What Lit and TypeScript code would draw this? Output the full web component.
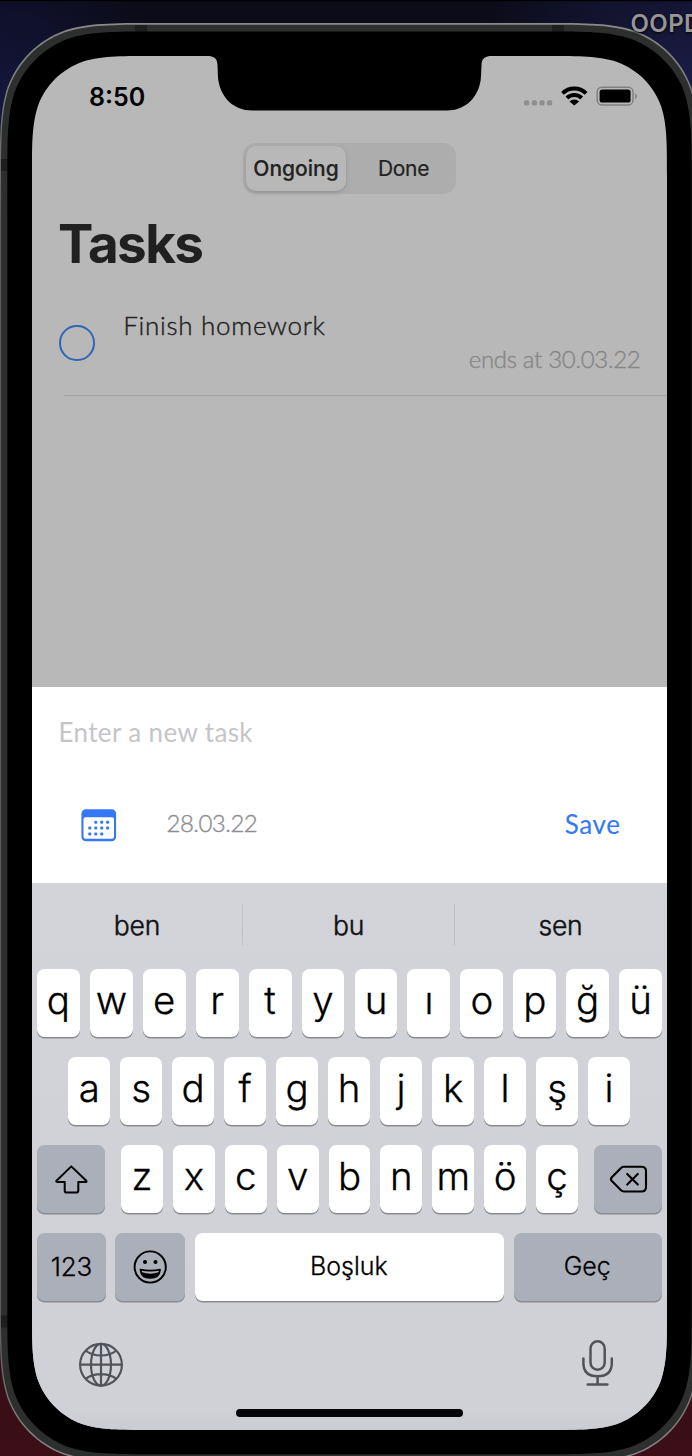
import { LitElement, html, svg, css, unsafeCSS } from "lit";
import { customElement, property } from "lit/decorators.js";

/** Continuous-curvature rounded rectangle, optionally with a notch in its top edge. */
function squircle(x0: number, y0: number, x1: number, y1: number, r: number, notch = ""): string {
  const a = 1.52866 * r, b = 1.08849 * r, c = 0.8684 * r, d = 0.63149 * r, e = 0.07491 * r, f = 0.37282 * r, g = 0.16906 * r;
  return [
    `M${x0 + a} ${y0}`, notch, `H${x1 - a}`,
    `C${x1 - b} ${y0} ${x1 - c} ${y0} ${x1 - d} ${y0 + e}`,
    `C${x1 - f} ${y0 + g} ${x1 - g} ${y0 + f} ${x1 - e} ${y0 + d}`,
    `C${x1} ${y0 + c} ${x1} ${y0 + b} ${x1} ${y0 + a}`,
    `V${y1 - a}`,
    `C${x1} ${y1 - b} ${x1} ${y1 - c} ${x1 - e} ${y1 - d}`,
    `C${x1 - g} ${y1 - f} ${x1 - f} ${y1 - g} ${x1 - d} ${y1 - e}`,
    `C${x1 - c} ${y1} ${x1 - b} ${y1} ${x1 - a} ${y1}`,
    `H${x0 + a}`,
    `C${x0 + b} ${y1} ${x0 + c} ${y1} ${x0 + d} ${y1 - e}`,
    `C${x0 + f} ${y1 - g} ${x0 + g} ${y1 - f} ${x0 + e} ${y1 - d}`,
    `C${x0} ${y1 - c} ${x0} ${y1 - b} ${x0} ${y1 - a}`,
    `V${y0 + a}`,
    `C${x0} ${y0 + b} ${x0} ${y0 + c} ${x0 + e} ${y0 + d}`,
    `C${x0 + g} ${y0 + f} ${x0 + f} ${y0 + g} ${x0 + d} ${y0 + e}`,
    `C${x0 + c} ${y0} ${x0 + b} ${y0} ${x0 + a} ${y0}Z`,
  ].join(" ");
}

const NOTCH =
  "H175 C182 0 185.3 2.5 185.5 9 C185.8 16 185.8 19 186.3 24 C189 42 202 54.5 220 54.5 " +
  "H415 C433 54.5 446 42 448.7 24 C449.2 19 449.2 16 449.5 9 C449.7 2.5 453 0 460 0";
const SCREEN = squircle(0, 0, 635, 1374, 79, NOTCH);

const bezel = html`<svg class="bezel" viewBox="0 0 692 1456" width="692" height="1456" aria-hidden="true">
  <defs>
    <linearGradient id="edge" x1="0" y1="23" x2="0" y2="1462" gradientUnits="userSpaceOnUse">
      <stop offset="0" stop-color="#8a8a8a" /><stop offset=".07" stop-color="#757575" />
      <stop offset=".14" stop-color="#5a5c5c" /><stop offset=".9" stop-color="#5a5c5c" />
      <stop offset="1" stop-color="#8a8a8a" />
    </linearGradient>
  </defs>
  <rect width="692" height="1.2" fill="#000" />
  <path d=${squircle(-0.2, 23, 699, 1462.5, 102)} fill="url(#edge)" />
  <path d=${squircle(1.1, 24.7, 697.7, 1461, 101)} fill="#2d2e2e" />
  <g fill="#1d1e1e">
    <rect x="135" y="25" width="12" height="7" /><rect x="552" y="25" width="12" height="7" />
    <rect x="1" y="159" width="7" height="12" /><rect x="1" y="1315.500" width="7" height="12" />
  </g>
  <path d=${squircle(7.3, 31.5, 691.6, 1454.3, 96.5)} fill="#000" />
</svg>`;

const statusIcons = html`<svg viewBox="522 85 120 24" width="120" height="24" aria-hidden="true">
  <g fill="#8f8f8f">
    <rect x="524" y="100.300" width="5.200" height="5.200" rx="1.600" /><rect x="531.800" y="100.300" width="5.200" height="5.200" rx="1.600" />
    <rect x="539.400" y="100.300" width="5.200" height="5.200" rx="1.600" /><rect x="547" y="100.300" width="5.200" height="5.200" rx="1.600" />
  </g>
  <g fill="none" stroke="#000" stroke-width="3.900">
    <path d="M562.500 93.300 A16.800 16.800 0 0 1 586.100 93.300" />
    <path d="M566.900 98 A10.500 10.500 0 0 1 581.700 98" />
  </g>
  <path d="M574.300 105.400 L569.500 101.500 A6.800 6.800 0 0 1 579.100 101.500Z" fill="#000" />
  <rect x="597.200" y="87.200" width="35.800" height="17.800" rx="4.800" fill="none" stroke="#808080" stroke-width="1.500" />
  <rect x="599.600" y="89.600" width="31" height="13" rx="2.600" fill="#000" />
  <path d="M635.200 93.200 a3.400 3.400 0 0 1 0 6z" fill="#808080" />
</svg>`;

const calendarDots = [[1, 0], [2, 0], [3, 0], [0, 1], [1, 1], [2, 1], [3, 1], [0, 2], [1, 2], [2, 2]];
const calendar = html`<svg viewBox="81 808.500 36 33" width="36" height="33" aria-hidden="true">
  <path fill="#3478f6" fill-rule="evenodd" d="M86 808.700 H111.500 A4.600 4.600 0 0 1 116.100 813.300 V836.200 A4.600 4.600 0 0 1 111.500 840.800 H86 A4.600 4.600 0 0 1 81.400 836.200 V813.300 A4.600 4.600 0 0 1 86 808.700Z
    M85.500 816.700 A2 2 0 0 0 83.500 818.700 V836.300 A2 2 0 0 0 85.500 838.300 H112 A2 2 0 0 0 114 836.300 V818.700 A2 2 0 0 0 112 816.700Z" />
  ${calendarDots.map(([c, r]) => svg`<rect x=${88.3 + c * 5.95} y=${820.3 + r * 5.8} width="3" height="3" rx="1" fill="#3478f6" />`)}
</svg>`;

const shiftIcon = html`<svg viewBox="53 1163 36 32" width="36" height="32" fill="none" stroke="#000" stroke-width="2" stroke-linejoin="round" aria-hidden="true">
  <path d="M71.300 1166.400 L86.300 1180.700 Q87 1181.800 85.700 1182 H78.300 V1190.700 Q78.300 1192.500 76.500 1192.500 H66.500 Q64.700 1192.500 64.700 1190.700 V1182 H57.200 Q55.700 1181.800 56.500 1180.700Z" />
</svg>`;

const deleteIcon = html`<svg viewBox="607 1163 40 32" width="40" height="32" fill="none" stroke="#000" stroke-width="2.100" stroke-linejoin="round" stroke-linecap="round" aria-hidden="true">
  <path d="M623 1166.800 H640.500 Q645 1166.800 645 1171.300 V1187 Q645 1191.500 640.500 1191.500 H623 Q621.300 1191.500 620 1190.300 L610.600 1180.800 Q609.200 1179.200 610.600 1177.500 L620 1168 Q621.300 1166.800 623 1166.800Z" />
  <path d="M626.200 1173.900 L636.800 1184.600 M636.800 1173.900 L626.200 1184.600" />
</svg>`;

const emojiIcon = html`<svg viewBox="133 1250 34 34" width="34" height="34" aria-hidden="true">
  <circle cx="150.200" cy="1267" r="15.600" fill="none" stroke="#000" stroke-width="1.900" />
  <circle cx="145" cy="1262" r="2" /><circle cx="155.500" cy="1262" r="2" />
  <path d="M140.500 1269.600 Q150.200 1271.800 160 1269.600 Q159.500 1278 150.200 1278 Q141 1278 140.500 1269.600Z" fill="none" stroke="#000" stroke-width="1.700" stroke-linejoin="round" />
  <path d="M141.500 1272 Q150.200 1275.300 159.200 1272 Q157.500 1278 150.200 1278 Q143 1278 141.500 1272Z" />
</svg>`;

const globeIcon = html`<svg class="globe" viewBox="78 1342 46 46" width="46" height="46" fill="none" stroke="#50545a" stroke-width="2.200" aria-hidden="true">
  <circle cx="101" cy="1364.700" r="20.900" /><ellipse cx="101" cy="1364.700" rx="10" ry="20.900" />
  <path d="M101 1344 V1385.500 M80 1364.700 H122 M85.500 1350.500 Q92 1355.500 101 1355.500 T116.500 1350.500 M85.500 1379 Q92 1374.200 101 1374.200 T116.500 1379" />
</svg>`;

const micIcon = html`<svg viewBox="580 1338 36 50" width="36" height="50" fill="none" stroke="#50545a" stroke-width="2.500" stroke-linecap="round" aria-hidden="true">
  <rect x="590.500" y="1341.300" width="14.200" height="28.400" rx="7.100" />
  <path d="M583.400 1358.500 V1363 Q583.400 1376.300 597.600 1376.300 Q611.800 1376.300 611.800 1363 V1358.500 M597.600 1376.300 V1384.500 M587.700 1384.500 H607.400" />
</svg>`;

@customElement("task-row")
class TaskRow extends LitElement {
  @property() name = "";
  @property() due = "";
  static styles = css`
    :host { display: block; font-family: Lato, sans-serif; }
    .row { display: flex; align-items: center; padding: 0 26.500px 0 27.300px; height: 68px; margin-bottom: 19px; }
    .check { box-sizing: border-box; width: 35.500px; height: 35.500px; margin-top: 2.500px; border: 2.300px solid #2f66b8; border-radius: 50%; }
    .text { flex: 1; margin-left: 28.500px; line-height: 34px; }
    .name { font-size: 26px; font-weight: 300; letter-spacing: .7px; color: #222; -webkit-text-stroke: .4px #222; }
    .due { text-align: right; font-size: 24px; font-weight: 300; letter-spacing: -.3px; color: #878787; -webkit-text-stroke: .4px #878787; }
    .line { height: 1px; margin-left: 32px; background: #a3a3a3; }
  `;
  render() {
    return html`<div class="row">
        <div class="check"></div>
        <div class="text"><div class="name">${this.name}</div><div class="due">ends at ${this.due}</div></div>
      </div>
      <div class="line"></div>`;
  }
}

@customElement("soft-keyboard")
class SoftKeyboard extends LitElement {
  static styles = css`
    :host { display: block; height: 547px; background: linear-gradient(#d3d4da, #d1d2d8 60%, #d0d1d7 96%, #cbccd2); font-family: Inter, sans-serif; color: #000; }
    .suggestions { display: grid; grid-template-columns: 211px 212px 212px; align-items: center; height: 84px; margin-bottom: 2px; }
    .suggestion { height: 41px; line-height: 43px; text-align: center; font-size: 26.500px; font-weight: 300; letter-spacing: -.2px; -webkit-text-stroke: .5px #111; color: #111; border-right: 1.500px solid #bdbec4; }
    .suggestion:last-child { border-color: transparent; }
    .keys { display: flex; flex-direction: column; gap: 19.500px; padding: 0 5px; }
    .row { display: grid; grid-auto-flow: column; grid-auto-columns: 1fr; column-gap: 10.100px; height: 68.500px; }
    .middle { padding: 0 32px 0 31.300px; }
    .third { grid-template-columns: 67.700px 1fr 67.700px; column-gap: 16.500px; }
    .letters { display: grid; grid-auto-flow: column; grid-auto-columns: 1fr; column-gap: 10.100px; }
    .bottom { grid-template-columns: 68.700px 69.800px 1fr 148.500px; column-gap: 9.800px; }
    .key { box-sizing: border-box; min-width: 0; display: flex; justify-content: center; align-items: center; padding-bottom: 6.500px; border-radius: 7.500px; background: #fff; box-shadow: 0 1.500px 0 #8a8b8f; font-size: 38.500px; font-weight: 300; -webkit-text-stroke: .3px #000; line-height: 48px; }
    .special { background: #abafb9; padding-bottom: 0; }
    .word { font-size: 25px; padding: 0 1px 3px 0; letter-spacing: 0; }
    .digits { font-size: 26px; letter-spacing: -.2px; }
    .tools { display: flex; justify-content: space-between; align-items: center; height: 50px; padding: 0 51px 0 46px; margin-top: 37px; }
    .globe { margin-top: 3px; }
    .home { width: 227px; height: 8px; margin: 21px auto 0; border-radius: 4px; background: #050507; }
    svg { display: block; }
  `;
  private keys(letters: string) {
    return Array.from(letters, (l) => html`<div class="key">${l}</div>`);
  }
  render() {
    return html`
      <div class="suggestions">${["ben", "bu", "sen"].map((w) => html`<div class="suggestion">${w}</div>`)}</div>
      <div class="keys">
        <div class="row">${this.keys("qwertyuıopğü")}</div>
        <div class="row middle">${this.keys("asdfghjklşi")}</div>
        <div class="row third">
          <div class="key special">${shiftIcon}</div>
          <div class="letters">${this.keys("zxcvbnmöç")}</div>
          <div class="key special">${deleteIcon}</div>
        </div>
        <div class="row bottom">
          <div class="key special digits">123</div>
          <div class="key special">${emojiIcon}</div>
          <div class="key word">Boşluk</div>
          <div class="key special word">Geç</div>
        </div>
      </div>
      <div class="tools">${globeIcon}${micIcon}</div>
      <div class="home"></div>`;
  }
}

@customElement("app-root")
class AppRoot extends LitElement {
  static styles = css`
    :host { display: block; font-family: Inter, sans-serif; }
    .desktop { display: grid; width: 692px; height: 1456px; overflow: hidden; position: relative;
      background:
        radial-gradient(circle at 0 110px, #15173f, transparent 170px),
        radial-gradient(circle at 692px 110px, #1d1e4a, transparent 230px),
        linear-gradient(#0b0b19 0 40%, #2b0911 80%, #3c0f18); }
    .bezel { grid-area: 1 / 1; }
    .screen { grid-area: 1 / 1; width: 635px; height: 1374px; margin: 56px 0 0 32px; background: #b8b8b8; clip-path: path("${unsafeCSS(SCREEN)}"); }
    .label { position: absolute; left: 630.500px; top: 9px; line-height: 30px; font-size: 24px; font-weight: 600; letter-spacing: .4px; color: #969698; text-shadow: 0 1px 3px #000; white-space: nowrap; }
    .page { height: 631.300px; display: flow-root; }
    .status { display: flex; justify-content: space-between; align-items: center; height: 82px; padding: 0 25px 0 57px; }
    .time { font-size: 25px; font-weight: 600; color: #000; line-height: 30px; }
    .segments { box-sizing: border-box; display: flex; width: 213px; height: 51.500px; margin: 4.500px auto 0; padding: 3px; border-radius: 13px; background: #adadad; font-size: 21px; color: #222; line-height: 46.500px; text-align: center; }
    .segment { flex: 1; font-weight: 400; letter-spacing: -.3px; padding-left: 8px; -webkit-text-stroke: .2px #222; }
    .active { flex: none; width: 100px; padding: 0; letter-spacing: 0; font-weight: 500; height: 45.500px; border-radius: 10.500px; background: #b8b8b8; box-shadow: 0 2px 5px rgba(0, 0, 0, .12), 0 1px 2px rgba(0, 0, 0, .05); }
    h1 { margin: 20.400px 0 33.600px; padding-left: 26px; font-size: 53px; font-weight: 700; line-height: 60px; letter-spacing: -1.600px; color: #202020; }
    .sheet { height: 195.700px; background: #fff; font-family: Lato, sans-serif; }
    .entry { padding: 1px 0 0 26.500px; line-height: 88px; font-size: 26px; letter-spacing: .37px; color: #c5c5c7; }
    .actions { display: flex; align-items: center; height: 98px; padding: 0 46.500px 0 49px; }
    .date { margin-left: 49.500px; padding-bottom: 5px; font-size: 24px; font-weight: 300; letter-spacing: -.5px; color: #8e8e93; -webkit-text-stroke: .4px #8e8e93; }
    .save { margin-left: auto; padding-bottom: 3px; font-size: 26px; letter-spacing: .6px; color: #3478f6; -webkit-text-stroke: .1px #3478f6; }
  `;
  render() {
    return html`<div class="desktop">
      ${bezel}
      <div class="screen">
        <div class="page">
          <div class="status"><span class="time">8:50</span>${statusIcons}</div>
          <div class="segments"><div class="segment active">Ongoing</div><div class="segment">Done</div></div>
          <h1>Tasks</h1>
          <task-row name="Finish homework" due="30.03.22"></task-row>
        </div>
        <div class="sheet">
          <div class="entry">Enter a new task</div>
          <div class="actions">${calendar}<span class="date">28.03.22</span><span class="save">Save</span></div>
        </div>
        <soft-keyboard></soft-keyboard>
      </div>
      <div class="label">OOPD</div>
    </div>`;
  }
}
